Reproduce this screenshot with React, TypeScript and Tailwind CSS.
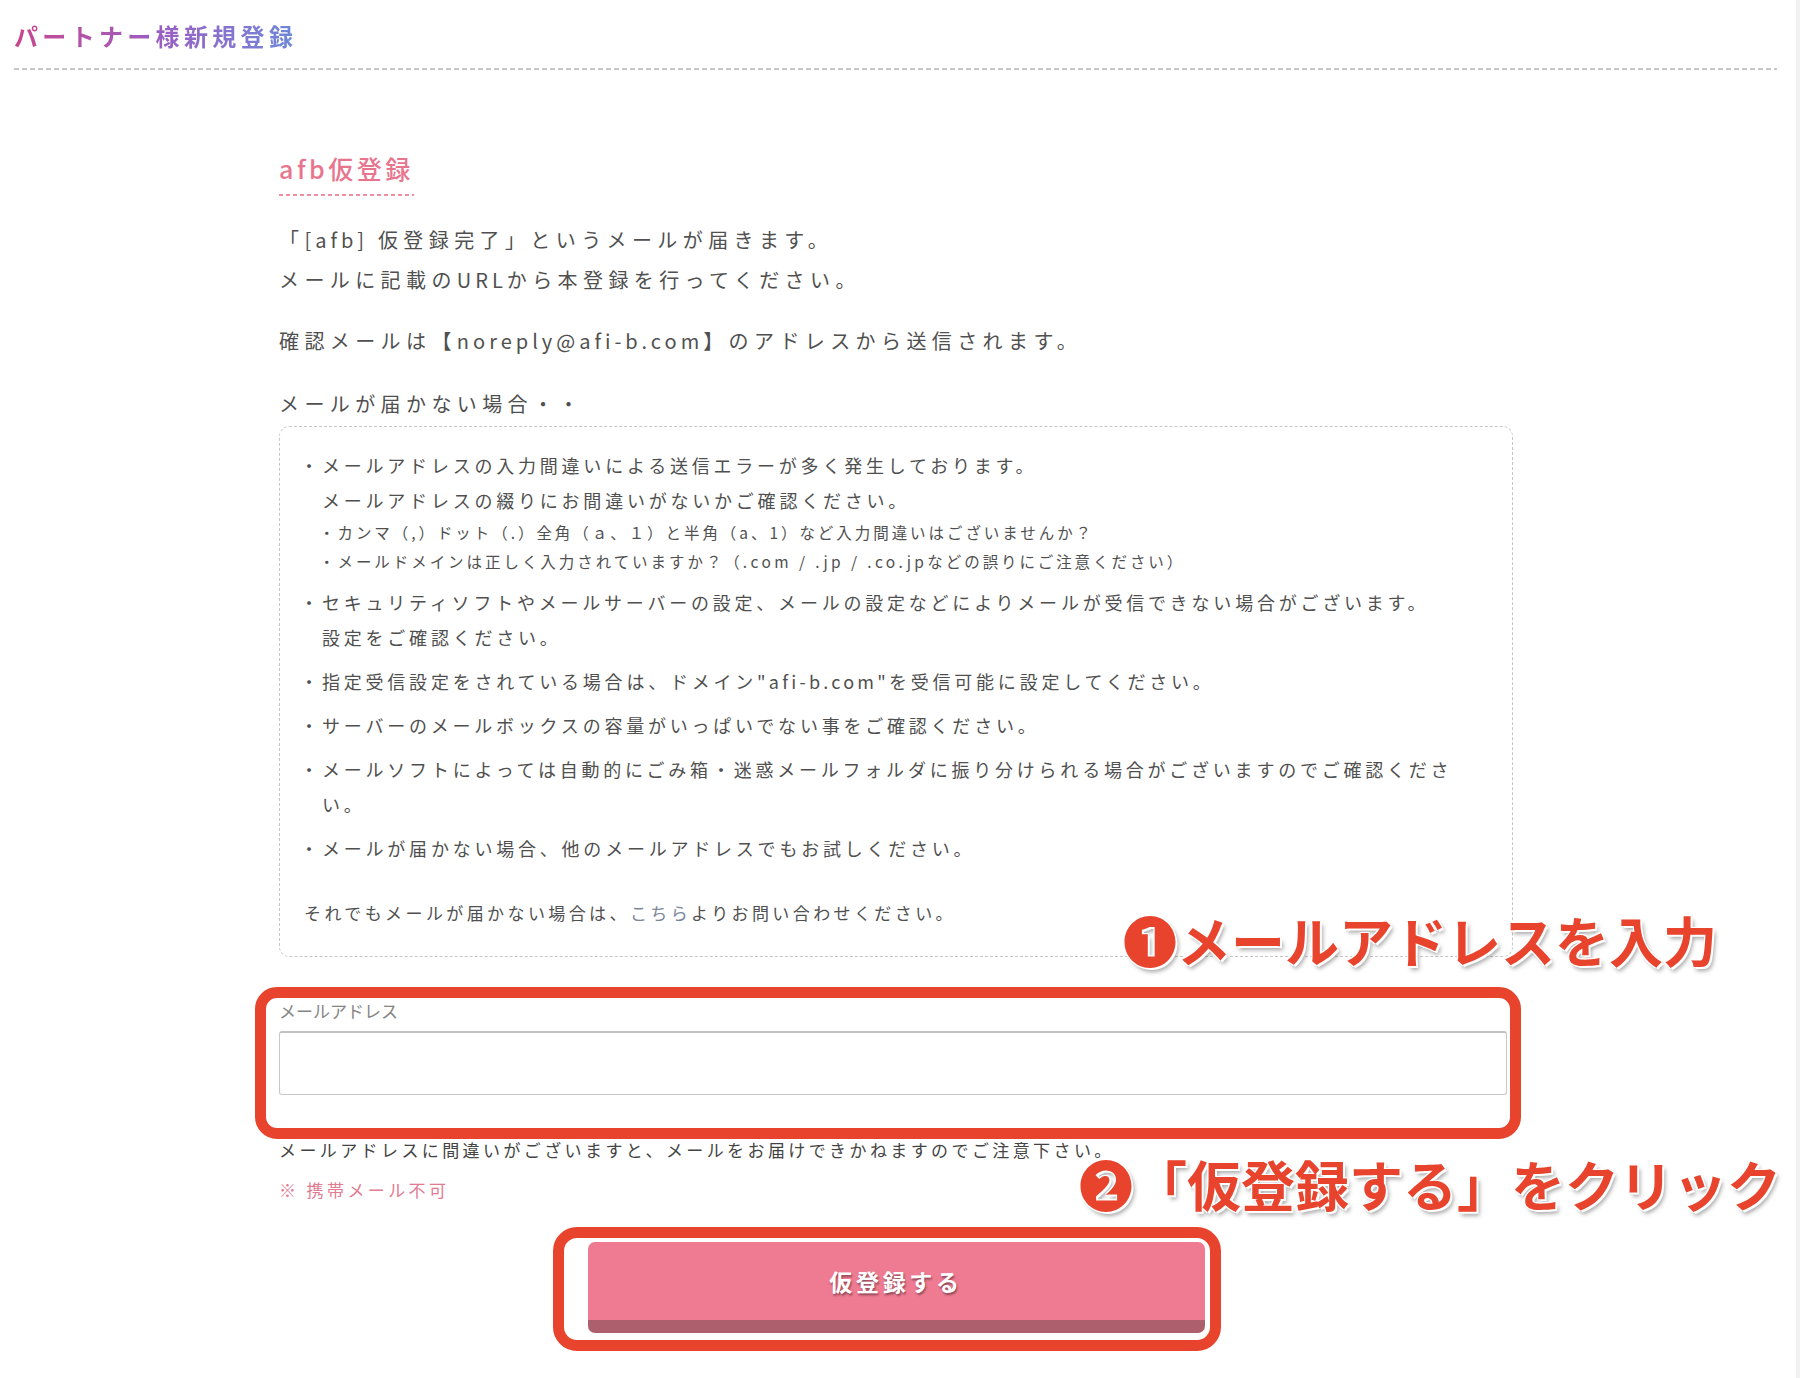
import React from "react";

const jp = { fontFamily: '"Noto Sans CJK JP", "Noto Sans", sans-serif' };

const Bullet = ({ children }: { children: React.ReactNode }) => (
  <div className="flex mt-[9px] first:mt-0">
    <span className="w-[18px] shrink-0 tracking-normal">
      <span className="relative -left-[4px]">・</span>
    </span>
    <div className="flex-1">{children}</div>
  </div>
);

const annot =
  "absolute text-[54px] leading-[62px] font-bold text-[#e8432d] [text-shadow:2px_2px_0_#fff,-1px_-1px_0_#fff,1px_-1px_0_#fff,-1px_1px_0_#fff,3px_4px_4px_rgba(0,0,0,0.35)]";

export default function App() {
  return (
    <div className="relative min-h-screen bg-white flex text-[#505050]" style={jp}>
      <div className="flex-1 pl-[14px] pr-[19px] pb-[40px]">
        {/* ページタイトル */}
        <h1 className="pt-[19px] text-[24px] leading-[34px] font-bold tracking-[0.18em]">
          <span className="bg-gradient-to-r from-[#c9448d] via-[#9a5dc2] to-[#6a88d8] bg-clip-text text-transparent">
            パートナー様新規登録
          </span>
        </h1>
        <div className="mt-[15px] h-[2px] bg-[repeating-linear-gradient(to_right,#c6c6c6_0_5px,transparent_5px_8px)]" />

        <div className="ml-[265px] w-[1234px]">
          <div className="mt-[81px] inline-flex flex-col">
            <span className="text-[25px] leading-[35px] font-medium text-[#e8758e] tracking-[0.14em]">
              afb仮登録
            </span>
            <div className="mt-[8px] h-[2px] bg-[repeating-linear-gradient(to_right,#ee8ea2_0_4px,transparent_4px_7px)]" />
          </div>

          <div className="mt-[24px] text-[20px] leading-[40px] tracking-[0.27em]">
            <p>
              「<span className="tracking-[0.2em]">[afb]</span> 仮登録完了」というメールが届きます。
            </p>
            <p>
              メールに記載の<span className="tracking-[0.2em]">URL</span>から本登録を行ってください。
            </p>
            <p className="mt-[21px]">
              確認メールは【<span className="tracking-[0.2em]">noreply@afi-b.com</span>】のアドレスから送信されます。
            </p>
            <p className="mt-[23px]">メールが届かない場合・・</p>
          </div>

          {/* 注意事項 */}
          <div className="mt-[2px] border border-dashed border-[#c6c6c6] rounded-[10px] pt-[21px] pb-[26px] pl-[24px] pr-[37px]">
            <div className="text-[18px] leading-[35px] tracking-[0.21em]">
              <Bullet>
                メールアドレスの入力間違いによる送信エラーが多く発生しております。
                <br />
                メールアドレスの綴りにお間違いがないかご確認ください。
                <div className="-ml-[3px] text-[15.5px] leading-[29px] tracking-[0.19em]">
                  <div>・カンマ（,）ドット（.）全角（ａ、１）と半角（a、1）など入力間違いはございませんか？</div>
                  <div>
                    ・メールドメインは正しく入力されていますか？（
                    <span className="tracking-[0.22em]">.com / .jp / .co.jp</span>などの誤りにご注意ください）
                  </div>
                </div>
              </Bullet>
              <Bullet>
                セキュリティソフトやメールサーバーの設定、メールの設定などによりメールが受信できない場合がございます。
                <br />
                設定をご確認ください。
              </Bullet>
              <Bullet>
                指定受信設定をされている場合は、ドメイン<span className="tracking-[0.18em]">"afi-b.com"</span>
                を受信可能に設定してください。
              </Bullet>
              <Bullet>サーバーのメールボックスの容量がいっぱいでない事をご確認ください。</Bullet>
              <Bullet>
                メールソフトによっては自動的にごみ箱・迷惑メールフォルダに振り分けられる場合がございますのでご確認ください。
              </Bullet>
              <Bullet>メールが届かない場合、他のメールアドレスでもお試しください。</Bullet>
            </div>
            <p className="mt-[29px] text-[17px] leading-[35px] tracking-[0.2em]">
              それでもメールが届かない場合は、<span className="text-[#7b8597]">こちら</span>よりお問い合わせください。
            </p>
          </div>

          {/* 入力欄 */}
          <label className="block mt-[42px] text-[17px] leading-[24px] tracking-normal text-[#858585]">
            メールアドレス
          </label>
          <input
            type="email"
            className="block mt-[8px] w-[1228px] h-[64px] border border-[#c9c9c9] border-t-2 border-t-[#c2c2c2] rounded-[3px] bg-white px-3 outline-none"
          />
          <p className="mt-[43px] text-[17px] leading-[24px] tracking-[0.2em] text-[#444]">
            メールアドレスに間違いがございますと、メールをお届けできかねますのでご注意下さい。
          </p>
          <p className="mt-[16px] text-[17px] leading-[24px] tracking-[0.2em] text-[#e27a90]">※ 携帯メール不可</p>

          <div className="mt-[40px] flex justify-center">
            <button className="w-[617px] h-[91px] rounded-[7px] bg-[#ee7b92] border-b-[13px] border-[#ad5f6d] text-white text-[23px] font-bold tracking-[0.16em] [text-shadow:1px_2px_2px_rgba(90,40,50,0.6)]">
              仮登録する
            </button>
          </div>
        </div>
      </div>
      <div className="w-[4px] bg-[#f1f1f1]" />

      {/* 手順の注記 */}
      <div className="absolute left-[255px] top-[987px] w-[1266px] h-[152px] border-[11px] border-[#e8432d] rounded-[22px]" />
      <div className="absolute left-[553px] top-[1227px] w-[668px] h-[124px] border-[11px] border-[#e8432d] rounded-[24px]" />
      <div className={`${annot} left-[1123px] top-[909px]`}>❶メールアドレスを入力</div>
      <div className={`${annot} left-[1079px] top-[1153px]`}>❷「仮登録する」をクリック</div>
    </div>
  );
}
